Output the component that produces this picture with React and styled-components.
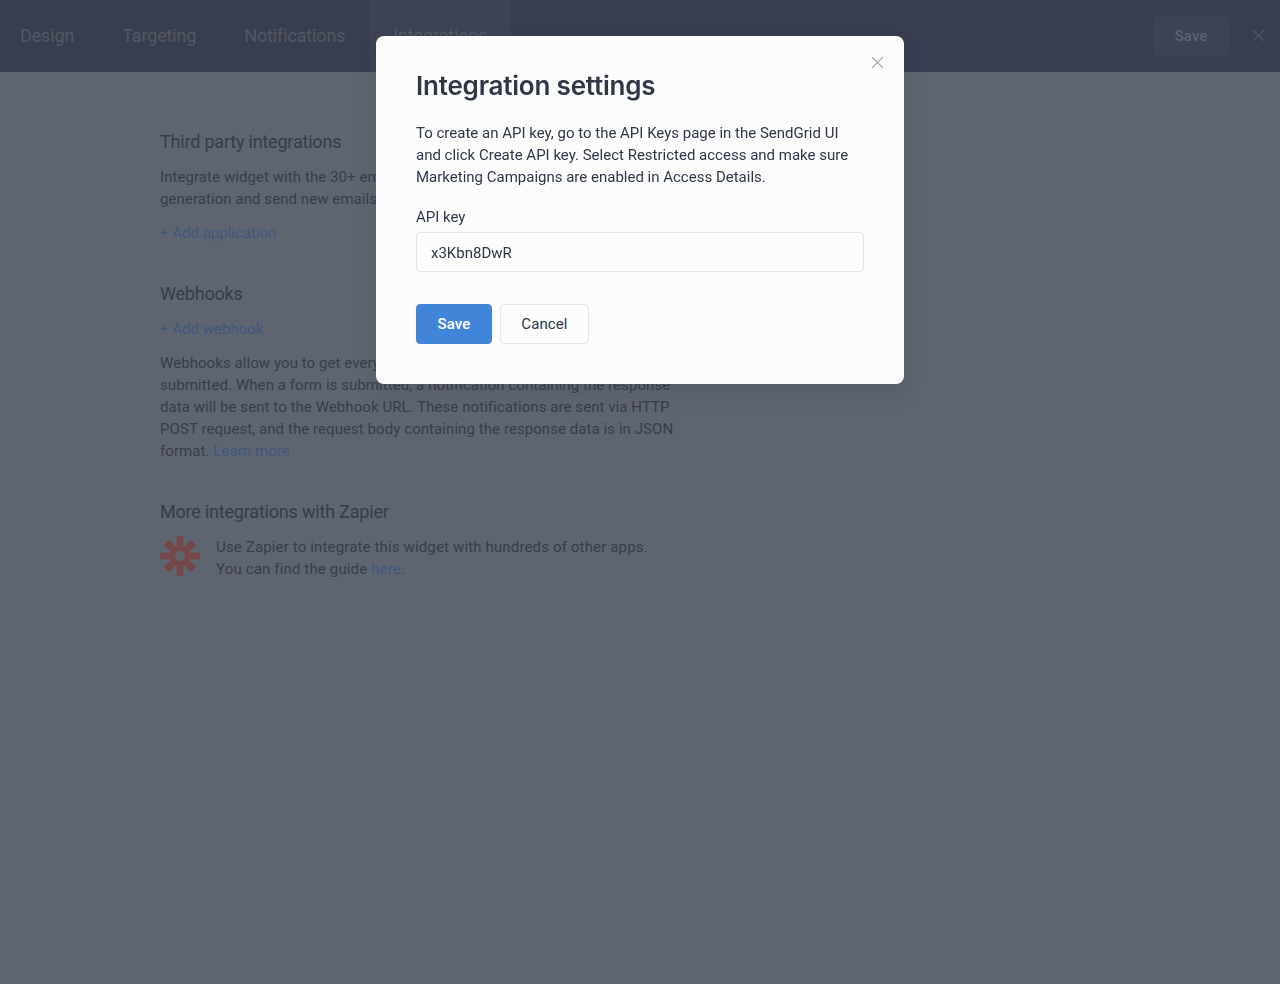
import React from 'react';
import styled, { createGlobalStyle } from 'styled-components';

const GlobalStyle = createGlobalStyle`
  html, body { margin: 0; padding: 0; background: #5f6570; }
  body { font-family: Roboto, "Liberation Sans", sans-serif; font-size: 15px; color: #2f3747; }
  * { box-sizing: border-box; }
`;

const Page = styled.div`
  min-height: 984px;
  background: #5f6570;
  color: #373d4c;
`;

const TopBar = styled.header`
  height: 72px;
  background: #393e4e;
  display: flex;
  align-items: center;
  justify-content: space-between;
`;

const Tabs = styled.nav`
  display: flex;
  align-self: stretch;
`;

const Tab = styled.div`
  display: flex;
  align-items: center;
  padding: 0 24px 2px;
  font-size: 18px;
  letter-spacing: -0.15px;
  color: #525764;
  background: ${(p) => (p.$active ? '#3e4353' : 'transparent')};
  &:first-child { padding-left: 20px; }
`;

const BarActions = styled.div`
  display: flex;
  align-items: center;
  gap: 22px;
  padding-right: 15px;
`;

const BarSave = styled.div`
  width: 76px;
  height: 40px;
  border-radius: 4px;
  background: #3e4353;
  color: #5c6170;
  font-weight: 500;
  font-size: 15px;
  display: flex;
  align-items: center;
  justify-content: center;
`;

const BarClose = styled.div`
  display: flex;
  width: 14px;
  justify-content: center;
  margin-bottom: 2px;
`;

const Content = styled.main`
  padding: 58px 0 0 160px;
`;

const Section = styled.section`
  margin-bottom: 38px;
`;

const SectionTitle = styled.h3`
  margin: 0 0 12px;
  font-size: 18px;
  line-height: 24px;
  letter-spacing: -0.2px;
  font-weight: 400;
  color: #363c4b;
`;

const Text = styled.p`
  margin: 0;
  font-size: 15px;
  line-height: 22px;
  letter-spacing: 0.07px;
  white-space: nowrap;
  color: #373d4c;
`;

const ZapierText = styled(Text)`
  letter-spacing: 0.15px;
`;

const BlueLink = styled.a`
  color: #41577f;
`;

const AddLink = styled.div`
  font-size: 15px;
  line-height: 22px;
  color: #41577f;
  margin: ${(p) => p.$margin};
`;

const ZapierRow = styled.div`
  display: flex;
  gap: 16px;
  align-items: flex-start;
`;

const Overlay = styled.div`
  position: fixed;
  inset: 0;
`;

const Modal = styled.div`
  position: absolute;
  left: 376px;
  top: 36px;
  width: 528px;
  height: 348px;
  padding: 34px 40px 40px;
  background: #fcfcfd;
  border-radius: 8px;
  box-shadow: 0 10px 14px 6px rgba(50, 55, 70, 0.08);
`;

const ModalClose = styled.div`
  position: absolute;
  top: 20px;
  right: 20px;
  display: flex;
`;

const ModalTitle = styled.h2`
  margin: 0 0 20px;
  font-family: Inter, Roboto, sans-serif;
  font-size: 26px;
  line-height: 32px;
  letter-spacing: -0.2px;
  font-weight: 600;
  color: #2f3747;
`;

const ModalText = styled.p`
  margin: 0 0 18px;
  font-size: 15px;
  line-height: 22px;
  white-space: nowrap;
  color: #2f3747;
`;

const Label = styled.label`
  display: block;
  font-size: 15px;
  line-height: 22px;
  margin-bottom: 4px;
  color: #2f3747;
`;

const Input = styled.input`
  display: block;
  width: 100%;
  height: 40px;
  padding: 2px 14px 0;
  border: 1px solid #e1e5ee;
  border-radius: 4px;
  background: #fcfcfd;
  font-family: inherit;
  font-size: 15px;
  color: #2f3747;
  outline: none;
`;

const Buttons = styled.div`
  display: flex;
  gap: 8px;
  margin-top: 32px;
`;

const Button = styled.button`
  height: 40px;
  width: ${(p) => p.$width}px;
  border-radius: 4px;
  font-family: inherit;
  font-size: 15px;
  font-weight: ${(p) => (p.$primary ? 500 : 400)};
  letter-spacing: 0.1px;
  border: 1px solid ${(p) => (p.$primary ? '#4185d8' : '#e1e5ee')};
  background: ${(p) => (p.$primary ? '#4185d8' : '#fcfcfd')};
  color: ${(p) => (p.$primary ? '#fff' : '#2f3747')};
`;

const Cross = ({ size, color }) => (
  <svg width={size} height={size} viewBox="0 0 12 12" fill="none">
    <path d="M1 1l10 10M11 1L1 11" stroke={color} strokeWidth="1" />
  </svg>
);

const ZapierIcon = () => (
  <svg width="40" height="40" viewBox="0 0 40 40">
    <g stroke="#754749" strokeWidth="7">
      <path d="M20 0v40M0 20h40M6.5 6.5l27 27M33.5 6.5l-27 27" />
    </g>
    <circle cx="20" cy="20" r="5" fill="#5f6570" />
  </svg>
);

export default function App() {
  return (
    <Page>
      <GlobalStyle />
      <TopBar>
        <Tabs>
          <Tab>Design</Tab>
          <Tab>Targeting</Tab>
          <Tab>Notifications</Tab>
          <Tab $active>Integrations</Tab>
        </Tabs>
        <BarActions>
          <BarSave>Save</BarSave>
          <BarClose>
            <Cross size={13} color="#555a68" />
          </BarClose>
        </BarActions>
      </TopBar>

      <Content>
        <Section>
          <SectionTitle>Third party integrations</SectionTitle>
          <Text>
            Integrate widget with the 30+ email marketing services<br />
            generation and send new emails to your contacts.
          </Text>
          <AddLink $margin="12px 0 0">+ Add application</AddLink>
        </Section>
        <Section>
          <SectionTitle>Webhooks</SectionTitle>
          <AddLink $margin="0 0 12px">+ Add webhook</AddLink>
          <Text>
            Webhooks allow you to get every response when the form is<br />
            submitted. When a form is submitted, a notification containing the response<br />
            data will be sent to the Webhook URL. These notifications are sent via HTTP<br />
            POST request, and the request body containing the response data is in JSON<br />
            format. <BlueLink>Learn more</BlueLink>
          </Text>
        </Section>
        <Section>
          <SectionTitle>More integrations with Zapier</SectionTitle>
          <ZapierRow>
            <ZapierIcon />
            <ZapierText>
              Use Zapier to integrate this widget with hundreds of other apps.<br />
              You can find the guide <BlueLink>here</BlueLink>.
            </ZapierText>
          </ZapierRow>
        </Section>
      </Content>

      <Overlay>
        <Modal>
          <ModalClose>
            <Cross size={13} color="#9aa0ab" />
          </ModalClose>
          <ModalTitle>Integration settings</ModalTitle>
          <ModalText>
            To create an API key, go to the API Keys page in the SendGrid UI<br />
            and click Create API key. Select Restricted access and make sure<br />
            Marketing Campaigns are enabled in Access Details.
          </ModalText>
          <Label>API key</Label>
          <Input defaultValue="x3Kbn8DwR" />
          <Buttons>
            <Button $primary $width={76}>Save</Button>
            <Button $width={89}>Cancel</Button>
          </Buttons>
        </Modal>
      </Overlay>
    </Page>
  );
}
